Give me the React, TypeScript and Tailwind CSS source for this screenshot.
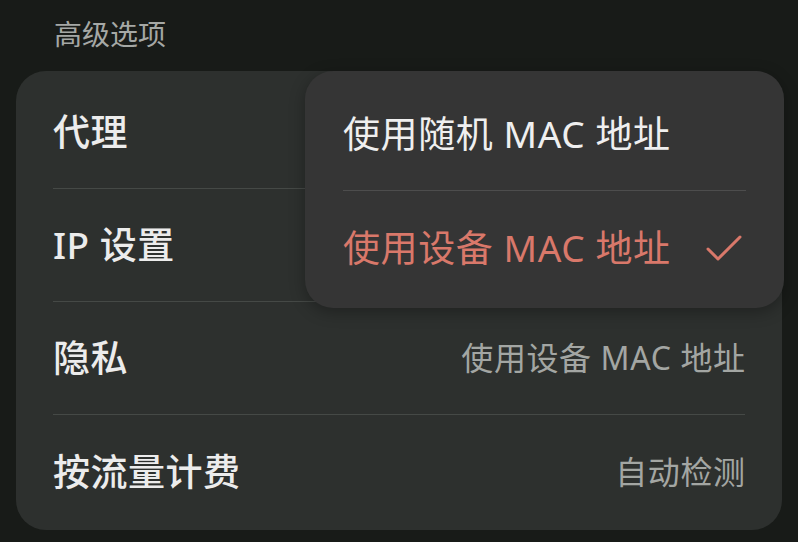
import React from "react";

const font = { fontFamily: '"Noto Sans", "Noto Sans CJK SC", sans-serif' };

function Row({ label, value, last }: { label: string; value?: string; last?: boolean }) {
  return (
    <div className={`flex h-[113px] items-center justify-between ${last ? "" : "border-b border-[#454946]"}`}>
      <span className="text-[37px] font-medium tracking-[0.5px] text-[#ececec]">{label}</span>
      {value && <span className="mr-[-0.6px] text-[32px] tracking-[0.6px] text-[#a3a6a3]">{value}</span>}
    </div>
  );
}

export default function App() {
  return (
    <div className="relative h-[542px] w-[798px] overflow-hidden bg-[#181b18]" style={font}>
      <div className="h-[71px] pl-[54px] pt-[14px] text-[28px] leading-[40px] text-[#a5a8a5]">高级选项</div>
      <div className="mx-[16px] h-[459px] rounded-[30px] bg-[#2d302e] px-[37px] pt-[5px]">
        <Row label="代理" />
        <Row label="IP 设置" />
        <Row label="隐私" value="使用设备 MAC 地址" />
        <Row label="按流量计费" value="自动检测" last />
      </div>
      <div className="absolute left-[305px] top-[71px] h-[237px] w-[479px] rounded-[28px] bg-[#353535] px-[38px] pt-[6px] shadow-[0_4px_16px_rgba(0,0,0,0.3)]">
        <div className="flex h-[114px] items-center border-b border-[#4d4d4d] text-[37px] tracking-[0.6px] text-[#efefef]">
          使用随机 MAC 地址
        </div>
        <div className="flex h-[114px] items-center justify-between text-[37px] tracking-[0.6px] text-[#d9786a]">
          <span>使用设备 MAC 地址</span>
          <svg width="40" height="40" viewBox="0 0 40 40" className="mr-[2px]">
            <path d="M4 21 L14 31 L36 9" fill="none" stroke="#d9786a" strokeWidth="3" strokeLinecap="round" strokeLinejoin="round" />
          </svg>
        </div>
      </div>
    </div>
  );
}
